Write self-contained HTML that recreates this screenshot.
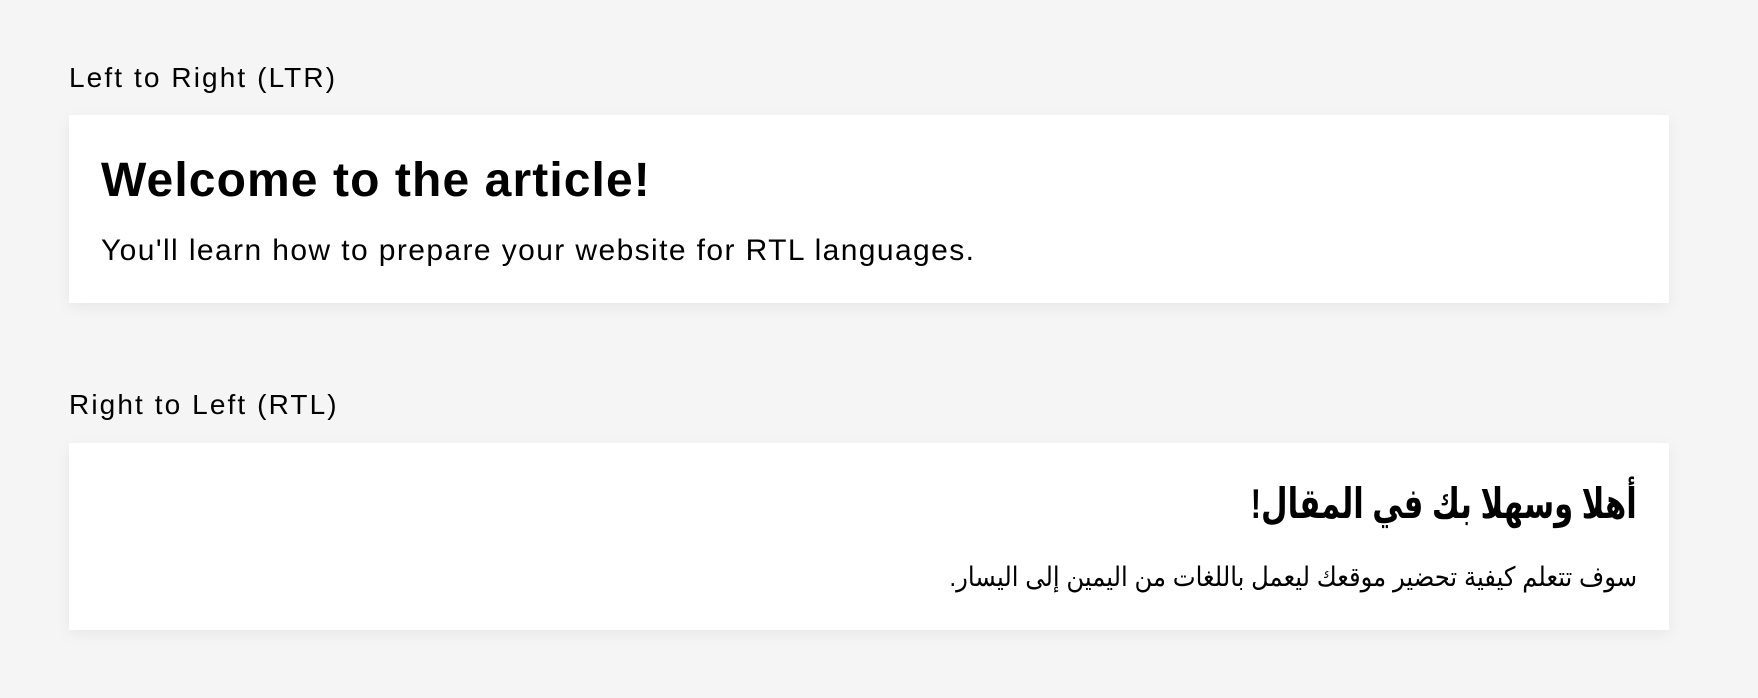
<!DOCTYPE html>
<html><head><meta charset="utf-8"><style>
html,body{margin:0;padding:0;background:#f5f5f5;width:1758px;height:698px;overflow:hidden;font-family:"Liberation Sans","DejaVu Sans",sans-serif;color:#000}
.label{position:absolute;left:69px;font-size:28px;line-height:32px;letter-spacing:2.1px}
.card{position:absolute;left:69px;width:1600px;background:#fff;box-shadow:0 4px 14px rgba(0,0,0,0.06);box-sizing:border-box;padding:0 32px}
h1{position:absolute;margin:0;font-size:48px;font-weight:900;line-height:56px;letter-spacing:1.1px;white-space:nowrap}
p{position:absolute;margin:0;font-size:30px;line-height:36px;letter-spacing:1.4px;white-space:nowrap}
.rtl{direction:rtl;text-align:right}
</style></head><body>
<div class="label" style="top:62px">Left to Right (LTR)</div>
<div class="card" style="top:115px;height:188px">
<h1 style="left:32px;top:38px">Welcome to the article!</h1>
<p style="left:32px;top:118px">You'll learn how to prepare your website for RTL languages.</p>
</div>
<div class="label" style="top:389px">Right to Left (RTL)</div>
<div class="card rtl" style="top:443px;height:187px">
<h1 style="right:32px;top:33px;font-size:42px;font-weight:bold;letter-spacing:0;transform:scaleX(0.73);transform-origin:right center">أهلا وسهلا بك في المقال!</h1>
<p style="right:32px;top:116px;font-size:27px;letter-spacing:0;transform:scaleX(0.9);transform-origin:right center">سوف تتعلم كيفية تحضير موقعك ليعمل باللغات من اليمين إلى اليسار.</p>
</div>
</body></html>
